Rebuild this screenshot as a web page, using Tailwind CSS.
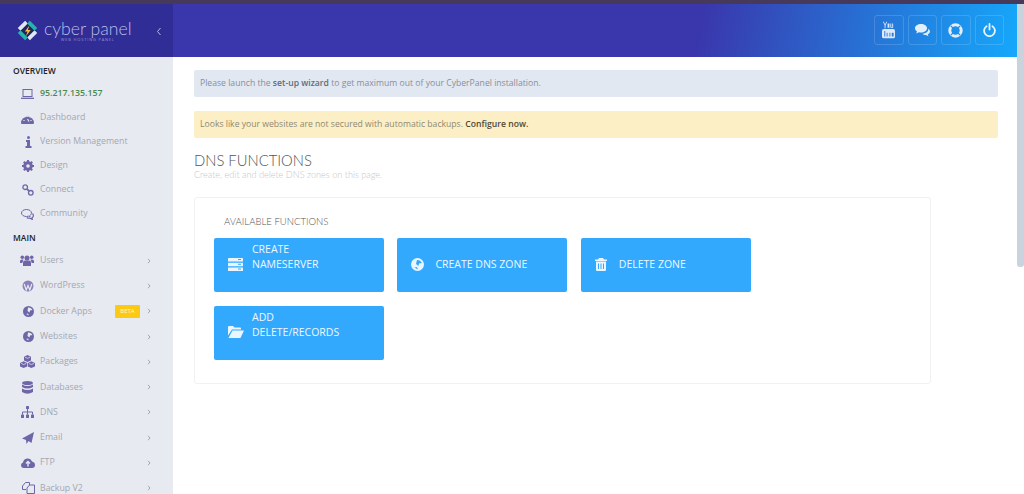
<!DOCTYPE html>
<html><head><meta charset="utf-8"><script src="https://cdn.jsdelivr.net/npm/@tailwindcss/browser@4"></script></head>
<body class="bg-white overflow-hidden">
<div class="w-[1024px] h-[494px] overflow-hidden flex flex-col font-['Open_Sans',sans-serif]">
  <div class="h-1 shrink-0 bg-[#46395a]"></div>
  <div class="flex flex-1 min-h-0">
    <div class="w-[1017px] flex flex-col min-h-0">
      <header class="h-[53px] shrink-0 flex">
        <div class="w-[173px] bg-[#302d96] flex items-center pl-[16px] relative">
          <svg class="w-[23px] h-[23px] shrink-0 mb-[1px]" viewBox="0 0 22 22"><path d="M11 3 L19 11 L11 19 L3 11Z" fill="#23235f"/><path d="M3 10 L10 3 M12 19 L19 12" stroke="#dfe6f5" stroke-width="3.600" fill="none"/><path d="M12 3 L19 10 M3 12 L10 19" stroke="#25b3ad" stroke-width="3.600" fill="none"/><path d="M13 6 L8.500 12 H11 L9.500 16.500 L14 10.500 H11.300Z" fill="#f4c63d"/></svg>
          <div class="ml-[5px] flex flex-col items-center leading-none text-[#b9bfe6]">
            <span class="font-['Lato'] font-light text-[17.600px] leading-[17px]">cyber panel</span>
            <span class="text-[4px] leading-[5px] tracking-[0.8px] text-[#8f94d6]">WEB HOSTING PANEL</span>
          </div>
          <svg class="absolute left-[156px] top-[23px] w-[6px] h-[9px]" viewBox="0 0 6 9"><path d="M4.500 1 L1.500 4.500 L4.500 8" fill="none" stroke="#b4b8e4"/></svg>
        </div>
        <div class="flex-1 bg-[linear-gradient(100deg,#3a36ab_0%,#3a36ab_62%,#15a8fb_100%)] flex items-center justify-end pr-[13px] pb-[1px] gap-[4px]">
          <div class="w-[29.500px] h-[30px] rounded-[3px] border border-white/15 flex items-center justify-center">
            <svg class="w-[13px] h-[18px]" viewBox="0 0 14 18" fill="#dbe9fb"><rect x="0" y="8" width="14" height="10" rx="2"/><rect x="2.500" y="10" width="1" height="6" fill="#2a7ad6"/><rect x="5" y="12" width="1" height="4" fill="#2a7ad6"/><rect x="8" y="12" width="1" height="4" fill="#2a7ad6"/><rect x="10.500" y="12" width="2" height="4" fill="#2a7ad6"/><path d="M2 0 L3.300 3 L4.600 0 H5.600 L3.800 4 V7 H2.800 V4 L1 0Z M6 2 H8 V6.500 H6Z M9 2 H10 V5.700 H11 V2 H12 V6.500 H9Z"/></svg>
          </div>
          <div class="w-[29.500px] h-[30px] rounded-[3px] border border-white/15 flex items-center justify-center">
            <svg class="w-[15px] h-[13px]" viewBox="0 0 15 13" fill="#e3eefb"><path d="M6 0C2.700 0 0 1.900 0 4.200c0 1.300.8 2.400 2 3.200L1.200 9.600l2.800-1.300c.6.1 1.300.2 2 .2 3.300 0 6-1.900 6-4.300S9.300 0 6 0z"/><path d="M13 4.500c.2.3.3.7.3 1 0 2.400-2.800 4-6 4.300.9.8 2.300 1.200 3.700 1.200l2.400 1.300-.6-2C14.300 9.600 15 8.600 15 7.500c0-1.100-.8-2.200-2-3z"/></svg>
          </div>
          <div class="w-[29.500px] h-[30px] rounded-[3px] border border-white/15 flex items-center justify-center">
            <svg class="w-[15px] h-[15px]" viewBox="0 0 15 15"><circle cx="7.500" cy="7.500" r="5.700" fill="none" stroke="#e3eefb" stroke-width="3"/><path d="M2.800 2.800 L5 5 M12.200 2.800 L10 5 M2.800 12.200 L5 10 M12.200 12.200 L10 10" stroke="#2a8ae6" stroke-width="1.200"/></svg>
          </div>
          <div class="w-[29.500px] h-[30px] rounded-[3px] border border-white/15 flex items-center justify-center">
            <svg class="w-[13px] h-[14px]" viewBox="0 0 13 14" fill="none" stroke="#e8f3fd" stroke-width="1.800" stroke-linecap="round"><path d="M3.600 3.200 A5.400 5.400 0 1 0 9.400 3.200"/><path d="M6.500 1 V6.500"/></svg>
          </div>
        </div>
      </header>
      <div class="flex flex-1 min-h-0">
        <aside class="w-[173px] shrink-0 bg-[#e8eaf2] overflow-hidden">
          <div class="pl-[13px] h-[25px] pt-[7px] text-[8.500px] leading-[13px] font-semibold text-[#222]">OVERVIEW</div>
          <ul class="text-[8.800px] text-[#a3a7b0]">
            <li class="h-6 flex items-center"><span class="w-10 flex justify-end pr-[6px]"><svg class="w-[13px] h-[10px]" viewBox="0 0 13 10" fill="none" stroke="#6f66a8"><rect x="2" y=".5" width="9" height="7"/><path d="M0 9.300 H13" stroke-width="1.300"/></svg></span><span class="text-[#4c8a4c] font-semibold">95.217.135.157</span></li>
            <li class="h-6 flex items-center"><span class="w-10 flex justify-end pr-[6px]"><svg class="w-[13px] h-[12px]" viewBox="0 0 13 12"><path d="M0 11 A6.500 6.500 0 1 1 13 11 Q13 12 12 12 H1 Q0 12 0 11Z" fill="#6f66a8"/><path d="M3 8 v1 M6.500 3 v1.500 M10 8 v1 M4 4.500 v1 M9 4.500 v1 M6.500 7 L8 9.500" stroke="#e8eaf2" stroke-width="1.200"/></svg></span><span>Dashboard</span></li>
            <li class="h-6 flex items-center"><span class="w-10 flex justify-end pr-[8px]"><svg class="w-[7px] h-[12px]" viewBox="0 0 7 12" fill="#6f66a8"><circle cx="3.500" cy="1.500" r="1.500"/><path d="M1 4 H5 V10 H6.500 V12 H.5 V10 H2 V6 H1Z"/></svg></span><span>Version Management</span></li>
            <li class="h-6 flex items-center"><span class="w-10 flex justify-end pr-[6px]"><svg class="w-[12px] h-[12px]" viewBox="0 0 12 12"><circle cx="6" cy="6" r="3.500" fill="none" stroke="#6f66a8" stroke-width="2.600"/><path d="M6 0 V12 M0 6 H12 M1.800 1.800 L10.200 10.200 M10.200 1.800 L1.800 10.200" stroke="#6f66a8" stroke-width="2"/><circle cx="6" cy="6" r="1.800" fill="#e8eaf2"/></svg></span><span>Design</span></li>
            <li class="h-6 flex items-center"><span class="w-10 flex justify-end pr-[6px]"><svg class="w-[12px] h-[12px]" viewBox="0 0 12 12" fill="none" stroke="#6f66a8" stroke-width="1.300"><circle cx="3.200" cy="3.200" r="2.300"/><circle cx="8.800" cy="8.800" r="2.300"/><path d="M4.800 4.800 L7.200 7.200" stroke-width="1.800"/></svg></span><span>Connect</span></li>
            <li class="h-6 flex items-center"><span class="w-10 flex justify-end pr-[6px]"><svg class="w-[13px] h-[11px]" viewBox="0 0 13 11" fill="none" stroke="#6f66a8"><path d="M5.500 .5C2.700 .5.500 2 .5 4s2.200 3.500 5 3.500c.8 0 1.500-.1 2.100-.3L9 8l-.2-1.500C10 5.800 10.500 4.900 10.500 4 10.500 2 8.300.5 5.500.5z"/><path d="M11.500 4.500c1.500 1.800.8 3.500-.5 4.200l.3 1.800-2.300-1.300c-1.200.2-2.300 0-3.300-.7" stroke-width="1.200"/></svg></span><span>Community</span></li>
          </ul>
          <div class="pl-[13px] h-[22px] pt-[5px] text-[8.500px] leading-[13px] font-semibold text-[#222]">MAIN</div>
          <ul class="text-[8.800px] text-[#a3a7b0]">
            <li class="h-[25.300px] flex items-center"><span class="w-10 flex justify-end pr-[6px]"><svg class="w-[14px] h-[11px]" viewBox="0 0 14 11" fill="#6f66a8"><circle cx="7" cy="3" r="2.500"/><circle cx="2.300" cy="2.300" r="1.800"/><circle cx="11.700" cy="2.300" r="1.800"/><path d="M3 11 V7.500 Q3 5.500 5 5.500 H9 Q11 5.500 11 7.500 V11Z"/><path d="M0 8 V6 Q0 4.500 2 4.500 H3.500 L2.300 8Z M14 8 V6 Q14 4.500 12 4.500 H10.500 L11.700 8Z"/></svg></span><span class="flex-1">Users</span><svg class="w-[4px] h-[6px] mr-[22px]" viewBox="0 0 4 6"><path d="M1 .8 L3 3 L1 5.200" fill="none" stroke="#a3a7b0"/></svg></li>
            <li class="h-[25.300px] flex items-center"><span class="w-10 flex justify-end pr-[6px]"><svg class="w-[12px] h-[12px]" viewBox="0 0 12 12"><circle cx="6" cy="6" r="5.500" fill="#8a82b8"/><path d="M2.200 4 L4.200 10 L6 5.500 L7.800 10 L9.800 4" fill="none" stroke="#e8eaf2" stroke-width="1.200"/></svg></span><span class="flex-1">WordPress</span><svg class="w-[4px] h-[6px] mr-[22px]" viewBox="0 0 4 6"><path d="M1 .8 L3 3 L1 5.200" fill="none" stroke="#a3a7b0"/></svg></li>
            <li class="h-[25.300px] flex items-center"><span class="w-10 flex justify-end pr-[6px]"><svg class="w-[11px] h-[11px]" viewBox="0 0 11 11"><circle cx="5.500" cy="5.500" r="5.500" fill="#6f66a8"/><path d="M5 1.500 Q8 1 9.500 4 L7 4.500 L6.500 6.500 L4.500 5 Z M3 8 L5 7.500 L6 9.500 Z" fill="#e8eaf2"/></svg></span><span class="flex-1">Docker Apps</span><span class="w-[25px] h-[13px] mr-[7px] rounded-[1px] bg-[#fdca13] text-[#fff8d8] text-[6px] leading-[13px] text-center">BETA</span><svg class="w-[4px] h-[6px] mr-[22px]" viewBox="0 0 4 6"><path d="M1 .8 L3 3 L1 5.200" fill="none" stroke="#a3a7b0"/></svg></li>
            <li class="h-[25.300px] flex items-center"><span class="w-10 flex justify-end pr-[6px]"><svg class="w-[11px] h-[11px]" viewBox="0 0 11 11"><circle cx="5.500" cy="5.500" r="5.500" fill="#6f66a8"/><path d="M5 1.500 Q8 1 9.500 4 L7 4.500 L6.500 6.500 L4.500 5 Z M3 8 L5 7.500 L6 9.500 Z" fill="#e8eaf2"/></svg></span><span class="flex-1">Websites</span><svg class="w-[4px] h-[6px] mr-[22px]" viewBox="0 0 4 6"><path d="M1 .8 L3 3 L1 5.200" fill="none" stroke="#a3a7b0"/></svg></li>
            <li class="h-[25.300px] flex items-center"><span class="w-10 flex justify-end pr-[5px]"><svg class="w-[15px] h-[13px]" viewBox="0 0 15 13" fill="#6f66a8"><path d="M7.500 0 L11 1.800 V5.500 L7.500 7 L4 5.500 V1.800Z"/><path d="M3.700 6.300 L7.200 8 V11.500 L3.700 13 L0 11.500 V8Z"/><path d="M11.300 6.300 L15 8 V11.500 L11.300 13 L7.800 11.500 V8Z"/><path d="M5 2.200 L7.500 3.300 L10 2.200 M1 8.400 L3.700 9.500 L6.200 8.400 M8.800 8.400 L11.300 9.500 L14 8.400" fill="none" stroke="#e8eaf2" stroke-width=".7"/></svg></span><span class="flex-1">Packages</span><svg class="w-[4px] h-[6px] mr-[22px]" viewBox="0 0 4 6"><path d="M1 .8 L3 3 L1 5.200" fill="none" stroke="#a3a7b0"/></svg></li>
            <li class="h-[25.300px] flex items-center"><span class="w-10 flex justify-end pr-[7px]"><svg class="w-[11px] h-[13px]" viewBox="0 0 11 13" fill="#6f66a8"><ellipse cx="5.500" cy="2" rx="5.500" ry="2"/><path d="M0 3.500 Q5.500 6.500 11 3.500 V6 Q5.500 9 0 6Z"/><path d="M0 7.500 Q5.500 10.500 11 7.500 V11 Q5.500 14.500 0 11Z"/></svg></span><span class="flex-1">Databases</span><svg class="w-[4px] h-[6px] mr-[22px]" viewBox="0 0 4 6"><path d="M1 .8 L3 3 L1 5.200" fill="none" stroke="#a3a7b0"/></svg></li>
            <li class="h-[25.300px] flex items-center"><span class="w-10 flex justify-end pr-[6px]"><svg class="w-[13px] h-[12px]" viewBox="0 0 13 12" fill="#6f66a8"><rect x="5" y="0" width="3" height="3" rx=".5"/><rect x="0" y="8.500" width="3" height="3.500" rx=".5"/><rect x="5" y="8.500" width="3" height="3.500" rx=".5"/><rect x="10" y="8.500" width="3" height="3.500" rx=".5"/><path d="M1.500 8.500 V6 H11.500 V8.500 M6.500 3 V8.500" fill="none" stroke="#6f66a8"/></svg></span><span class="flex-1">DNS</span><svg class="w-[4px] h-[6px] mr-[22px]" viewBox="0 0 4 6"><path d="M1 .8 L3 3 L1 5.200" fill="none" stroke="#a3a7b0"/></svg></li>
            <li class="h-[25.300px] flex items-center"><span class="w-10 flex justify-end pr-[6px]"><svg class="w-[12px] h-[12px]" viewBox="0 0 12 12" fill="#6f66a8"><path d="M12 0 L9.500 11 L6.500 9 L4.500 12 L4 8 L0 6.500Z"/></svg></span><span class="flex-1">Email</span><svg class="w-[4px] h-[6px] mr-[22px]" viewBox="0 0 4 6"><path d="M1 .8 L3 3 L1 5.200" fill="none" stroke="#a3a7b0"/></svg></li>
            <li class="h-[25.300px] flex items-center"><span class="w-10 flex justify-end pr-[5px]"><svg class="w-[14px] h-[10px]" viewBox="0 0 14 10"><path d="M3 10 Q0 10 0 7 Q0 5 2 4.500 Q2.500 1 6 .5 Q9.500 0 11 3.500 Q14 4 14 7 Q14 10 11 10Z" fill="#6f66a8"/><path d="M7 8.500 V4 M5 5.500 L7 3.500 L9 5.500" fill="none" stroke="#e8eaf2" stroke-width="1.400"/></svg></span><span class="flex-1">FTP</span><svg class="w-[4px] h-[6px] mr-[22px]" viewBox="0 0 4 6"><path d="M1 .8 L3 3 L1 5.200" fill="none" stroke="#a3a7b0"/></svg></li>
            <li class="h-[25.300px] flex items-center"><span class="w-10 flex justify-end pr-[5px]"><svg class="w-[13px] h-[12px]" viewBox="0 0 13 12" fill="none" stroke="#6f66a8"><path d="M4 7.500 H.5 V4 L3.500 .5 H7.500 V3"/><path d="M5 11.500 V6 L7.500 3 H12.500 V11.500Z"/></svg></span><span class="flex-1">Backup V2</span><svg class="w-[4px] h-[6px] mr-[22px]" viewBox="0 0 4 6"><path d="M1 .8 L3 3 L1 5.200" fill="none" stroke="#a3a7b0"/></svg></li>
          </ul>
        </aside>
        <main class="flex-1 min-w-0 pl-[21px] pr-[19px] pt-[13px]">
          <div class="h-[27px] rounded-[2px] bg-[#e1e8f2] pl-[6px] flex items-center text-[8.650px] text-[#8a8f98]"><p>Please launch the <b class="font-semibold text-[#666b73]">set-up wizard</b> to get maximum out of your CyberPanel installation.</p></div>
          <div class="h-[27px] mt-[14px] rounded-[2px] bg-[#fcefc6] pl-[6px] flex items-center text-[8.650px] text-[#8f8970]"><p>Looks like your websites are not secured with automatic backups. <b class="font-semibold text-[#4f4a34]">Configure now.</b></p></div>
          <h1 class="mt-[12px] text-[14.800px] leading-[20px] font-['Lato'] font-light text-[#555]">DNS FUNCTIONS</h1>
          <p class="text-[9.150px] leading-[9px] font-['Lato'] font-light text-[#c4c6ca]">Create, edit and delete DNS zones on this page.</p>
          <section class="mt-[18px] w-[737px] h-[187px] rounded-[3px] border border-[#f0f1f3] pl-[19px]">
            <h2 class="pl-[10px] pt-[18px] h-[40px] text-[9.550px] leading-[11px] font-['Lato'] font-light text-[#555]">AVAILABLE FUNCTIONS</h2>
            <div class="grid grid-cols-[170px_170px_170px] gap-x-[13.400px] gap-y-[14px] text-[10.500px] leading-[15px] text-[#eef8ff]">
              <a class="h-[54px] rounded-[2px] bg-[#33a9fe] flex items-start pl-[14px]">
                <span class="w-[24px] h-[52px] shrink-0 flex items-center"><svg class="w-[15px] h-[13px]" viewBox="0 0 15 13" fill="#eaf6ff"><rect y="0" width="15" height="3.600" rx=".5"/><rect y="4.700" width="15" height="3.600" rx=".5"/><rect y="9.400" width="15" height="3.600" rx=".5"/><path d="M10 1 h3 v1 h-3z M10 5.700 h3 v1 h-3z M10 10.400 h3 v1 h-3z" fill="#33a9fe"/></svg></span>
                <span class="pt-[4px]">CREATE<br>NAMESERVER</span>
              </a>
              <a class="h-[54px] rounded-[2px] bg-[#33a9fe] flex items-center pl-[14px] pb-[2px]">
                <svg class="w-[13px] h-[13px] mr-[11px] shrink-0" viewBox="0 0 13 13"><circle cx="6.500" cy="6.500" r="6.500" fill="#eaf6ff"/><path d="M6 2 Q9 1.500 11 5 L8 5.500 L7.500 8 L5 6 Z M3.500 9.500 L6 9 L7 11.500 Z" fill="#33a9fe"/></svg>
                <span>CREATE DNS ZONE</span>
              </a>
              <a class="h-[54px] rounded-[2px] bg-[#33a9fe] flex items-center pl-[14px] pb-[2px]">
                <svg class="w-[12px] h-[13px] mr-[12px] shrink-0" viewBox="0 0 12 13" fill="#eaf6ff"><path d="M4 0 H8 L9 1.500 H12 V3 H0 V1.500 H3Z"/><path d="M1 3.600 H11 V12 Q11 13 10 13 H2 Q1 13 1 12Z"/><path d="M3.500 5.500 V11 M6 5.500 V11 M8.500 5.500 V11" stroke="#33a9fe"/></svg>
                <span>DELETE ZONE</span>
              </a>
              <a class="h-[54px] rounded-[2px] bg-[#33a9fe] flex items-start pl-[14px]">
                <span class="w-[24px] h-[52px] shrink-0 flex items-center"><svg class="w-[16px] h-[12px]" viewBox="0 0 16 12" fill="#eaf6ff"><path d="M0 1 Q0 0 1 0 H5 L6.500 1.500 H12 Q13 1.500 13 2.500 V3.500 H4 L0 9.500Z"/><path d="M4.500 4.500 H16 L12.500 12 H0.500Z"/></svg></span>
                <span class="pt-[4px]">ADD<br>DELETE/RECORDS</span>
              </a>
            </div>
          </section>
        </main>
      </div>
    </div>
    <div class="w-[7px] shrink-0"><div class="h-[263px] rounded-b-[3px] bg-[#c9d3dd]"></div></div>
  </div>
</div>
</body></html>
